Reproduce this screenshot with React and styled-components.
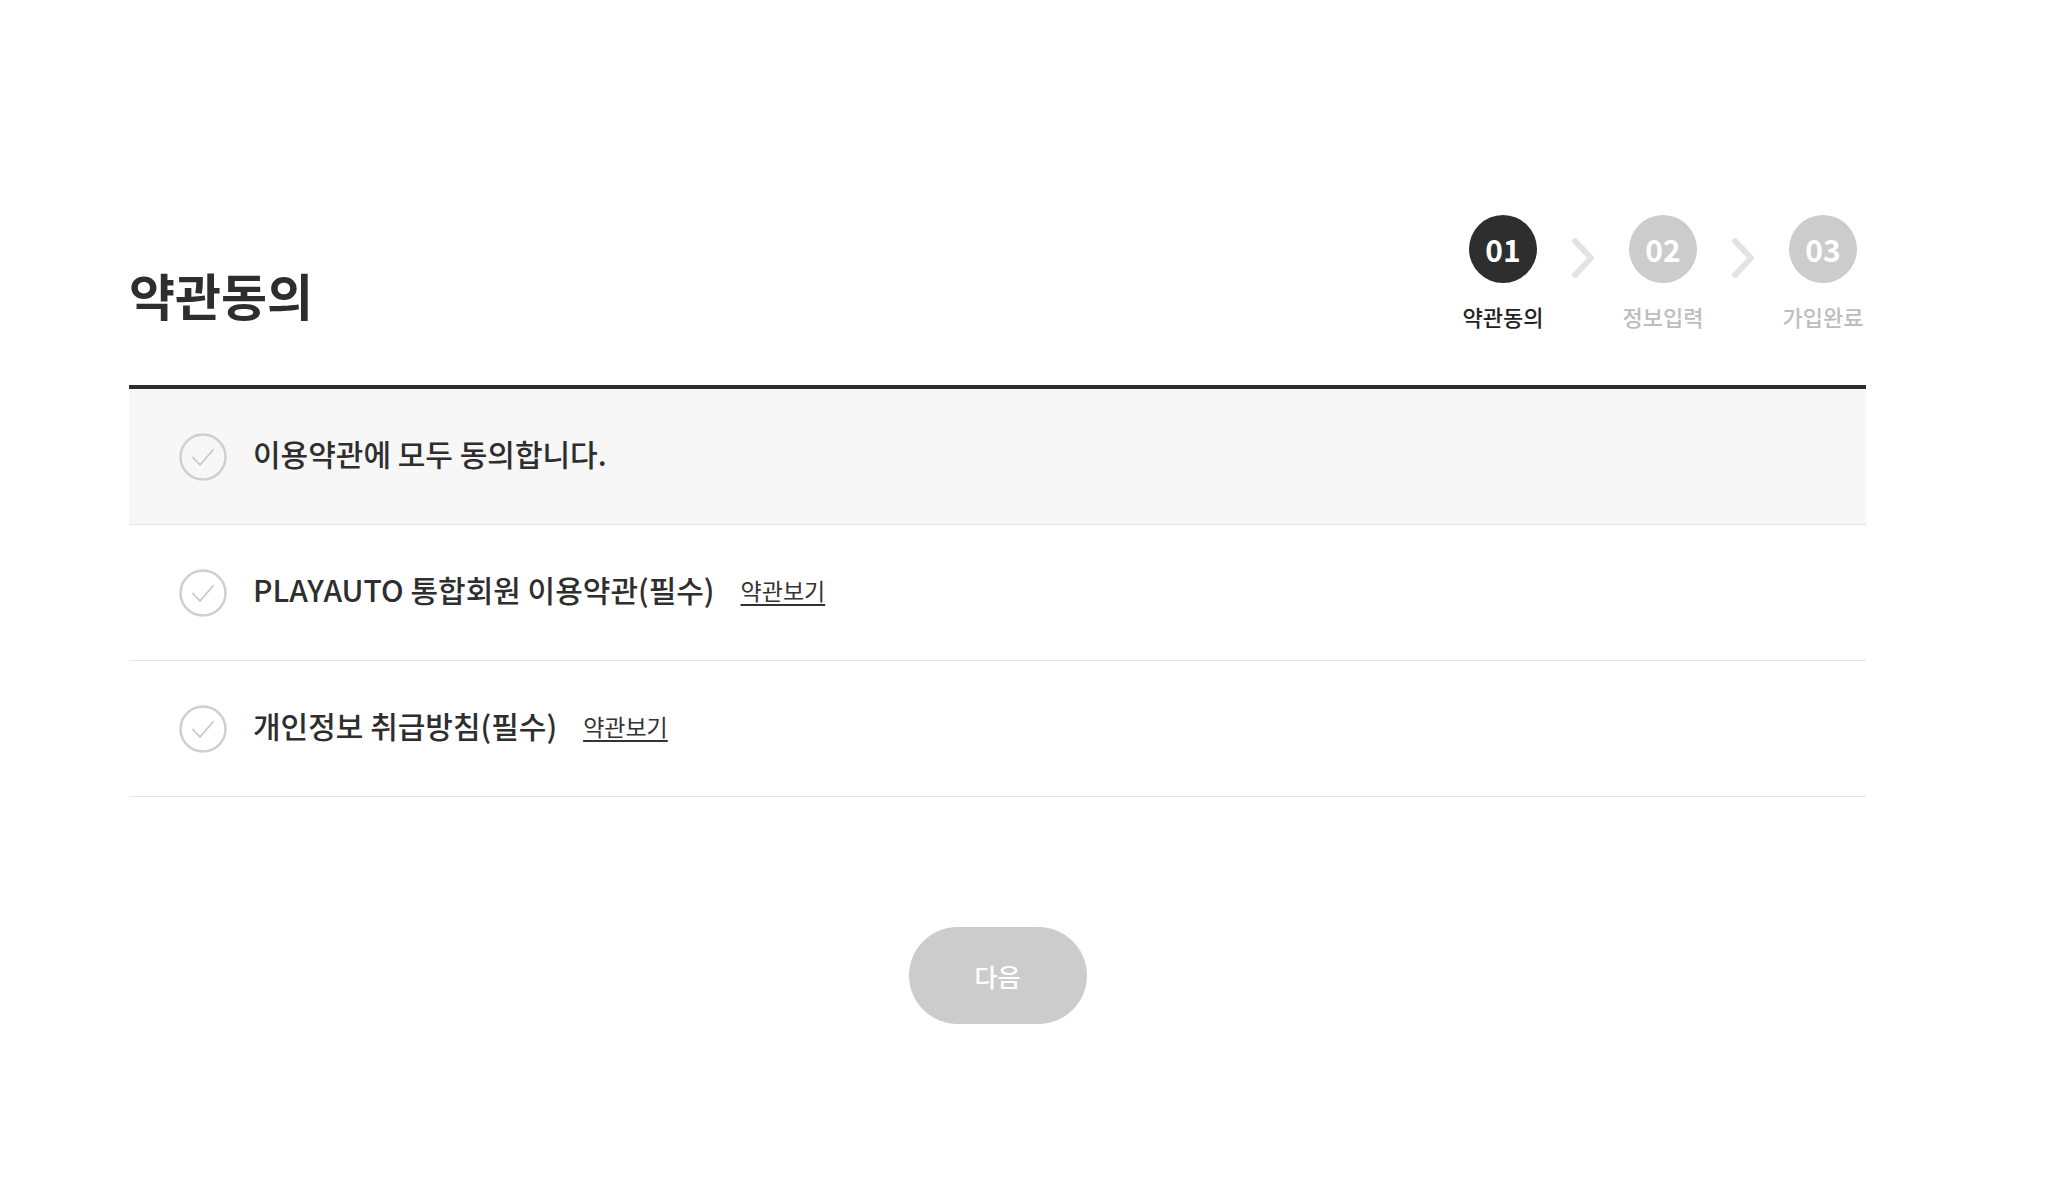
import React from 'react';
import styled, { createGlobalStyle } from 'styled-components';

const GlobalStyle = createGlobalStyle`
  body {
    margin: 0;
    background: #fff;
    font-family: "Noto Sans CJK KR", "Noto Sans", sans-serif;
    color: #333;
  }
`;

const steps = [
  { no: '01', label: '약관동의', active: true },
  { no: '02', label: '정보입력' },
  { no: '03', label: '가입완료' },
];

const terms = [
  { text: '이용약관에 모두 동의합니다.', all: true },
  { text: 'PLAYAUTO 통합회원 이용약관(필수)', link: true },
  { text: '개인정보 취급방침(필수)', link: true },
];

function CheckCircle() {
  return (
    <CheckIcon viewBox="0 0 48 48">
      <circle cx="24" cy="24" r="22.5" fill="none" stroke="#cfcfcf" strokeWidth="2.5" />
      <path d="M14 24.5 L21 32 L34 17" fill="none" stroke="#c8c8c8" strokeWidth="1.8" strokeLinecap="round" strokeLinejoin="round" />
    </CheckIcon>
  );
}

function Chevron() {
  return (
    <svg width="26" height="42" viewBox="0 0 26 42">
      <path d="M5 4 L21 21 L5 38" fill="none" stroke="#e3e3e3" strokeWidth="6" strokeLinecap="round" strokeLinejoin="round" />
    </svg>
  );
}

function App() {
  return (
    <>
      <GlobalStyle />
      <Page>
        <Container>
          <Header>
            <Title>약관동의</Title>
            <Steps>
              {steps.map((s, i) => (
                <React.Fragment key={s.no}>
                  {i > 0 && (
                    <Arrow>
                      <Chevron />
                    </Arrow>
                  )}
                  <Step>
                    <StepNo $active={s.active}>{s.no}</StepNo>
                    <StepLabel $active={s.active}>{s.label}</StepLabel>
                  </Step>
                </React.Fragment>
              ))}
            </Steps>
          </Header>

          <TermList>
            {terms.map((t) => (
              <TermRow key={t.text} $all={t.all}>
                <CheckCircle />
                <TermText>{t.text}</TermText>
                {t.link && <ViewLink href="#">약관보기</ViewLink>}
              </TermRow>
            ))}
          </TermList>

          <Footer>
            <NextButton type="button">다음</NextButton>
          </Footer>
        </Container>
      </Page>
    </>
  );
}

export default App;

const Page = styled.div`
  padding-top: 215px;
  padding-bottom: 150px;
`;

const Container = styled.div`
  margin-left: 129px;
  width: 1737px;
`;

const Header = styled.div`
  display: flex;
  justify-content: space-between;
  align-items: flex-end;
  padding-bottom: 56px;
`;

const Title = styled.h2`
  margin: 0 0 10px 0;
  font-size: 50px;
  line-height: 50px;
  font-weight: 700;
  color: #2e2e2e;
`;

const Steps = styled.div`
  display: flex;
  align-items: flex-start;
`;

const Step = styled.div`
  width: 86px;
  display: flex;
  flex-direction: column;
  align-items: center;
  gap: 20px;
`;

const StepNo = styled.div`
  width: 68px;
  height: 68px;
  border-radius: 50%;
  display: flex;
  align-items: center;
  justify-content: center;
  background: ${(p) => (p.$active ? '#2e2e2e' : '#cccccc')};
  color: #fff;
  font-size: 30px;
  font-weight: 700;
  line-height: 1;
`;

const StepLabel = styled.span`
  font-size: 22px;
  line-height: 26px;
  font-weight: 500;
  white-space: nowrap;
  color: ${(p) => (p.$active ? '#222' : '#bdbdbd')};
`;

const Arrow = styled.div`
  width: 74px;
  display: flex;
  justify-content: center;
  margin-top: 22px;
`;

const TermList = styled.ul`
  list-style: none;
  margin: 0;
  padding: 0;
  border-top: 4px solid #2e2e2e;
`;

const TermRow = styled.li`
  height: 135px;
  display: flex;
  align-items: center;
  padding-left: 50px;
  border-bottom: 1px solid #e4e4e4;
  background: ${(p) => (p.$all ? '#f7f7f7' : '#fff')};
`;

const CheckIcon = styled.svg`
  width: 48px;
  height: 48px;
  flex-shrink: 0;
  margin-right: 26px;
`;

const TermText = styled.span`
  font-size: 30px;
  font-weight: 500;
  color: #2e2e2e;
  padding-bottom: 8px;
`;

const ViewLink = styled.a`
  margin-left: 26px;
  padding-bottom: 6px;
  font-size: 23px;
  color: #333;
  text-decoration: underline;
  text-underline-offset: 4px;
`;

const Footer = styled.div`
  display: flex;
  justify-content: center;
  margin-top: 130px;
`;

const NextButton = styled.button`
  width: 178px;
  height: 97px;
  border: none;
  border-radius: 49px;
  background: #cccccc;
  color: #fff;
  font-family: "Noto Sans CJK KR", sans-serif;
  font-size: 25px;
  font-weight: 500;
  cursor: pointer;
`;
